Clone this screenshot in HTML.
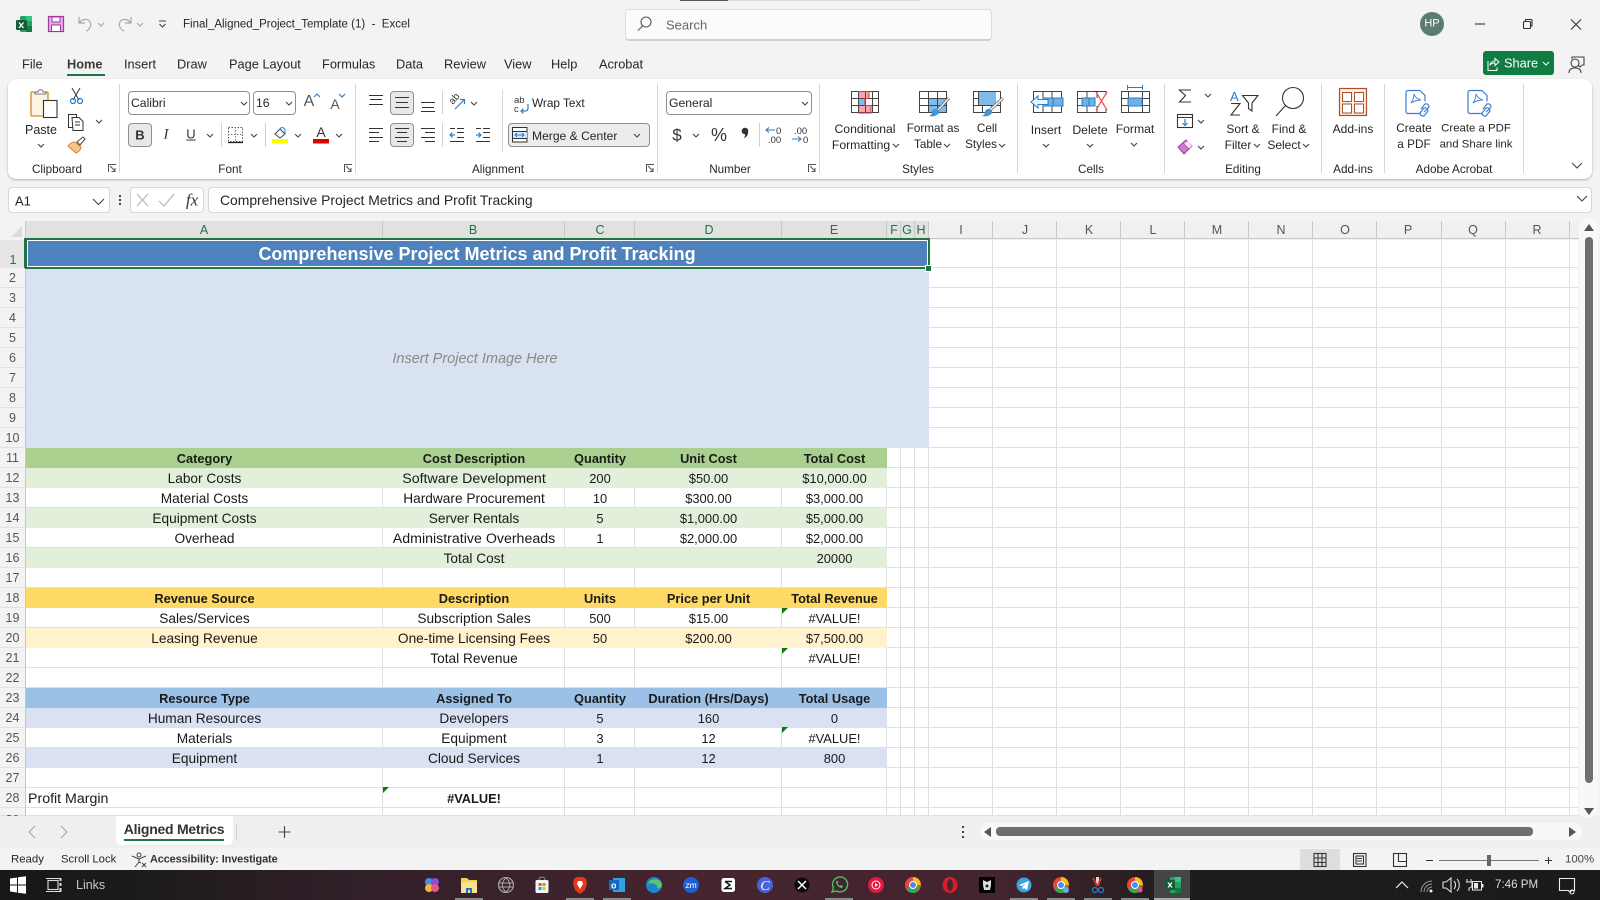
<!DOCTYPE html>
<html><head><meta charset="utf-8"><title>Excel</title>
<style>
*{box-sizing:border-box}
html,body{margin:0;padding:0}
body{width:1600px;height:900px;overflow:hidden;position:relative;background:#f3f3f3;font-family:"Liberation Sans",sans-serif;color:#262626;font-size:12.5px}
.c,.l{position:absolute;white-space:nowrap;line-height:1}
.c{transform:translate(-50%,-50%)}
.l{transform:translateY(-50%)}
.b{position:absolute}
.tab{font-size:12.8px}
.n{font-size:11.7px}
.rh{position:absolute;left:0;top:268px;width:25px;color:#555;font-size:12.5px;text-align:center}
.rh div{height:20px;line-height:19px;padding-top:1px;border-bottom:1px solid #e2e2e2}
.v{position:absolute;top:240px;height:576px;width:1px;background:#e0e0e0}
.hs{position:absolute;top:221px;height:17px;width:1px;background:#c8c8c8}
.ch{font-size:12.5px;color:#217346}
.cg{font-size:12.5px;color:#555}
table{position:absolute;left:26px;top:448px;border-collapse:collapse;table-layout:fixed;width:861px;font-size:13.7px;color:#1a1a1a}
td{padding:1px 0 0;height:20px;line-height:18px;text-align:center;white-space:nowrap;overflow:hidden}
td:nth-child(n+3){font-size:12.9px}
.h td,.h td:nth-child(n+3){font-weight:bold;font-size:12.8px}
.tri{position:absolute;width:0;height:0;border-top:6px solid #0b7a0b;border-right:6px solid transparent}
.w{color:#fff}
</style></head><body>

<!-- Title bar / top -->
<div class="b" style="left:680px;top:0;width:48px;height:1px;background:#555"></div>
<div class="b" style="left:728px;top:0;width:192px;height:1px;background:#ddd"></div>
<div class="l" style="left:183px;top:25px;font-size:11.5px">Final_Aligned_Project_Template (1)&nbsp; -&nbsp; Excel</div>
<div class="b" style="left:625px;top:9px;width:367px;height:32px;background:#fbfbfb;border:1px solid #dcdcdc;border-bottom:2px solid #d0d0d0;border-radius:4px"></div>
<div class="l" style="left:666px;top:25px;font-size:13px;color:#666">Search</div>
<div class="b" style="left:1420px;top:12px;width:24px;height:24px;border-radius:50%;background:#5b7e71"></div>
<div class="c w" style="left:1432px;top:24px;font-size:11px">HP</div>

<!-- Tabs -->
<div class="l tab" style="left:22px;top:65px">File</div>
<div class="l tab" style="left:67px;top:65px;font-weight:bold;color:#3a3a3a;font-size:12.8px">Home</div>
<div class="b" style="left:67px;top:74px;width:38px;height:2px;background:#217346"></div>
<div class="l tab" style="left:124px;top:65px">Insert</div>
<div class="l tab" style="left:177px;top:65px">Draw</div>
<div class="l tab" style="left:229px;top:65px">Page Layout</div>
<div class="l tab" style="left:322px;top:65px">Formulas</div>
<div class="l tab" style="left:396px;top:65px">Data</div>
<div class="l tab" style="left:444px;top:65px">Review</div>
<div class="l tab" style="left:504px;top:65px">View</div>
<div class="l tab" style="left:551px;top:65px">Help</div>
<div class="l tab" style="left:599px;top:65px">Acrobat</div>
<div class="b" style="left:1483px;top:51px;width:71px;height:24px;background:#107c41;border-radius:3px"></div>
<div class="l w" style="left:1504px;top:64px;font-size:12.8px">Share</div>

<!-- Ribbon -->
<div class="b" style="left:8px;top:79px;width:1584px;height:100px;background:#fff;border-radius:8px;box-shadow:0 1px 2px rgba(0,0,0,.28)"></div>
<div class="b" style="left:119px;top:84px;width:1px;height:89px;background:#d6d6d6"></div>
<div class="b" style="left:355px;top:84px;width:1px;height:89px;background:#d6d6d6"></div>
<div class="b" style="left:657px;top:84px;width:1px;height:89px;background:#d6d6d6"></div>
<div class="b" style="left:819px;top:84px;width:1px;height:89px;background:#d6d6d6"></div>
<div class="b" style="left:1017px;top:84px;width:1px;height:89px;background:#d6d6d6"></div>
<div class="b" style="left:1164px;top:84px;width:1px;height:89px;background:#d6d6d6"></div>
<div class="b" style="left:1321px;top:84px;width:1px;height:89px;background:#d6d6d6"></div>
<div class="b" style="left:1384px;top:84px;width:1px;height:89px;background:#d6d6d6"></div>
<div class="b" style="left:1523px;top:84px;width:1px;height:89px;background:#d6d6d6"></div>
<div class="b" style="left:502px;top:90px;width:1px;height:62px;background:#d6d6d6"></div>

<!-- Ribbon controls -->
<div class="b" style="left:128px;top:91px;width:122px;height:24px;border:1px solid #8f8f8f;border-radius:4px"></div>
<div class="b" style="left:253px;top:91px;width:43px;height:24px;border:1px solid #8f8f8f;border-radius:4px"></div>
<div class="b" style="left:128px;top:123px;width:24px;height:24px;border:1px solid #8f8f8f;border-radius:4px;background:#e8e8e8"></div>
<div class="b" style="left:390px;top:91px;width:24px;height:24px;border:1px solid #8f8f8f;border-radius:4px;background:#e8e8e8"></div>
<div class="b" style="left:390px;top:123px;width:24px;height:24px;border:1px solid #8f8f8f;border-radius:4px;background:#e8e8e8"></div>
<div class="b" style="left:508px;top:123px;width:142px;height:24px;border:1px solid #8f8f8f;border-radius:4px;background:#ececec"></div>
<div class="b" style="left:666px;top:91px;width:146px;height:24px;border:1px solid #8f8f8f;border-radius:4px"></div>

<div class="l" style="left:131px;top:103px;font-size:12.2px">Calibri</div>
<div class="l" style="left:256px;top:103px;font-size:12.2px">16</div>
<div class="c" style="left:309px;top:102px;font-size:16px;color:#555">A</div>
<div class="c" style="left:335px;top:104px;font-size:14px;color:#555">A</div>
<div class="c" style="left:140px;top:135px;font-weight:bold;font-size:13px;color:#333">B</div>
<div class="c" style="left:166px;top:135px;font-style:italic;font-family:'Liberation Serif',serif;font-size:15px;color:#333">I</div>
<div class="c" style="left:191px;top:134px;font-size:13px;color:#333;text-decoration:underline">U</div>
<div class="c" style="left:321px;top:132px;font-size:14px;color:#333">A</div>
<div class="l" style="left:532px;top:104px;font-size:11.8px">Wrap Text</div>
<div class="l" style="left:532px;top:136px;font-size:12.1px">Merge &amp; Center</div>
<div class="l" style="left:669px;top:103px;font-size:12.2px">General</div>
<div class="c" style="left:677px;top:135px;font-size:17px;color:#333">$</div>
<div class="c" style="left:719px;top:135px;font-size:18px;color:#333">%</div>
<div class="c" style="left:41px;top:130px">Paste</div>
<div class="c" style="left:865px;top:129px;font-size:12.2px">Conditional</div>
<div class="c" style="left:861px;top:145px;font-size:12.2px">Formatting</div>
<div class="c" style="left:933px;top:129px;font-size:11.7px">Format as</div>
<div class="c" style="left:928px;top:145px;font-size:11.7px">Table</div>
<div class="c" style="left:987px;top:129px;font-size:11.7px">Cell</div>
<div class="c" style="left:981px;top:145px;font-size:11.7px">Styles</div>
<div class="c" style="left:1046px;top:130px;font-size:12.2px">Insert</div>
<div class="c" style="left:1090px;top:130px;font-size:12.2px">Delete</div>
<div class="c" style="left:1135px;top:129px;font-size:12.2px">Format</div>
<div class="c" style="left:1243px;top:129px;font-size:12px">Sort &amp;</div>
<div class="c" style="left:1238px;top:145px;font-size:12px">Filter</div>
<div class="c" style="left:1289px;top:129px;font-size:12px">Find &amp;</div>
<div class="c" style="left:1284px;top:145px;font-size:12px">Select</div>
<div class="c" style="left:1353px;top:129px;font-size:12px">Add-ins</div>
<div class="c" style="left:1414px;top:129px;font-size:11.8px">Create</div>
<div class="c" style="left:1414px;top:145px;font-size:11.8px">a PDF</div>
<div class="c" style="left:1476px;top:129px;font-size:11.4px">Create a PDF</div>
<div class="c" style="left:1476px;top:145px;font-size:11.4px">and Share link</div>

<div class="c n" style="left:57px;top:170px">Clipboard</div>
<div class="c n" style="left:230px;top:170px">Font</div>
<div class="c n" style="left:498px;top:170px">Alignment</div>
<div class="c n" style="left:730px;top:170px">Number</div>
<div class="c n" style="left:918px;top:170px">Styles</div>
<div class="c n" style="left:1091px;top:170px">Cells</div>
<div class="c n" style="left:1243px;top:170px">Editing</div>
<div class="c n" style="left:1353px;top:170px">Add-ins</div>
<div class="c n" style="left:1454px;top:170px">Adobe Acrobat</div>

<!-- Formula bar -->
<div class="b" style="left:8px;top:187px;width:102px;height:26px;background:#fff;border:1px solid #d8d8d8;border-radius:4px"></div>
<div class="l" style="left:15px;top:201px;font-size:13px">A1</div>
<div class="b" style="left:130px;top:187px;width:74px;height:26px;background:#fff;border:1px solid #d8d8d8;border-radius:4px"></div>
<div class="c" style="left:192px;top:200px;font-family:'Liberation Serif',serif;font-style:italic;font-size:17px;color:#333">fx</div>
<div class="b" style="left:208px;top:187px;width:1384px;height:26px;background:#fff;border:1px solid #d8d8d8;border-radius:4px"></div>
<div class="l" style="left:220px;top:201px;font-size:13.9px">Comprehensive Project Metrics and Profit Tracking</div>

<!-- Column headers -->
<div class="b" style="left:26px;top:221px;width:903px;height:17px;background:#e1e1e1"></div>
<div class="b" style="left:929px;top:221px;width:650px;height:17px;background:#f0f0f0"></div>
<div class="b" style="left:26px;top:238px;width:903px;height:2px;background:#217346"></div>
<div class="b" style="left:929px;top:238px;width:650px;height:1px;background:#c6c6c6"></div>
<div class="hs" style="left:382px"></div><div class="hs" style="left:564px"></div><div class="hs" style="left:634px"></div><div class="hs" style="left:781px"></div><div class="hs" style="left:886px"></div><div class="hs" style="left:900px"></div><div class="hs" style="left:914px"></div><div class="hs" style="left:928px"></div><div class="hs" style="left:992px"></div><div class="hs" style="left:1056px"></div><div class="hs" style="left:1120px"></div><div class="hs" style="left:1184px"></div><div class="hs" style="left:1248px"></div><div class="hs" style="left:1312px"></div><div class="hs" style="left:1376px"></div><div class="hs" style="left:1441px"></div><div class="hs" style="left:1505px"></div><div class="hs" style="left:1569px"></div>
<div class="c ch" style="left:204px;top:230px">A</div>
<div class="c ch" style="left:473px;top:230px">B</div>
<div class="c ch" style="left:600px;top:230px">C</div>
<div class="c ch" style="left:709px;top:230px">D</div>
<div class="c ch" style="left:834px;top:230px">E</div>
<div class="c ch" style="left:894px;top:230px">F</div>
<div class="c ch" style="left:907px;top:230px">G</div>
<div class="c ch" style="left:921px;top:230px">H</div>
<div class="c cg" style="left:961px;top:230px">I</div>
<div class="c cg" style="left:1025px;top:230px">J</div>
<div class="c cg" style="left:1089px;top:230px">K</div>
<div class="c cg" style="left:1153px;top:230px">L</div>
<div class="c cg" style="left:1217px;top:230px">M</div>
<div class="c cg" style="left:1281px;top:230px">N</div>
<div class="c cg" style="left:1345px;top:230px">O</div>
<div class="c cg" style="left:1408px;top:230px">P</div>
<div class="c cg" style="left:1473px;top:230px">Q</div>
<div class="c cg" style="left:1537px;top:230px">R</div>

<!-- Grid -->
<div class="b" style="left:26px;top:240px;width:1552px;height:576px;background:#fff"></div>
<div class="b" style="left:26px;top:268px;width:1552px;height:548px;background:repeating-linear-gradient(to bottom,transparent 0,transparent 19px,#e0e0e0 19px,#e0e0e0 20px)"></div>
<div class="b" style="left:26px;top:267px;width:1552px;height:1px;background:#e0e0e0"></div>
<div class="b" style="left:0;top:815px;width:1578px;height:1px;background:#e0e0e0"></div>
<div class="v" style="left:382px"></div><div class="v" style="left:564px"></div><div class="v" style="left:634px"></div><div class="v" style="left:781px"></div><div class="v" style="left:886px"></div><div class="v" style="left:900px"></div><div class="v" style="left:914px"></div><div class="v" style="left:928px"></div><div class="v" style="left:992px"></div><div class="v" style="left:1056px"></div><div class="v" style="left:1120px"></div><div class="v" style="left:1184px"></div><div class="v" style="left:1248px"></div><div class="v" style="left:1312px"></div><div class="v" style="left:1376px"></div><div class="v" style="left:1441px"></div><div class="v" style="left:1505px"></div><div class="v" style="left:1569px"></div>
<div class="b" style="left:25px;top:221px;width:1px;height:595px;background:#c8c8c8"></div>

<!-- Row headers -->
<div class="b" style="left:0;top:240px;width:25px;height:28px;background:#e6e6e6"></div>
<div class="b" style="left:24px;top:238px;width:2px;height:30px;background:#217346"></div>
<div class="c" style="left:13px;top:260px;font-size:12.5px;color:#217346">1</div>
<div class="rh" style="height:548px;overflow:hidden">
<div>2</div><div>3</div><div>4</div><div>5</div><div>6</div><div>7</div><div>8</div><div>9</div><div>10</div><div>11</div><div>12</div><div>13</div><div>14</div><div>15</div><div>16</div><div>17</div><div>18</div><div>19</div><div>20</div><div>21</div><div>22</div><div>23</div><div>24</div><div>25</div><div>26</div><div>27</div><div>28</div><div style="transform:translateY(2px)">29</div>
</div>

<!-- Title + image placeholder -->
<div class="b" style="left:26px;top:240px;width:903px;height:28px;background:#4f81bd"></div>
<div class="b" style="left:26px;top:268px;width:903px;height:180px;background:#d9e2f0"></div>
<div class="c w" style="left:477px;top:254px;font-size:18px;font-weight:bold">Comprehensive Project Metrics and Profit Tracking</div>
<div class="c" style="left:475px;top:358.500px;font-size:14.500px;font-style:italic;color:#8a8a8a">Insert Project Image Here</div>
<div class="b" style="left:25px;top:238px;width:905px;height:31px;border:2px solid #217346"></div>
<div class="b" style="left:27px;top:240px;width:901px;height:27px;border:1px solid #fff"></div>
<div class="b" style="left:925px;top:265px;width:7px;height:7px;background:#217346;border:1px solid #fff"></div>

<!-- Data tables -->
<table>
<colgroup><col style="width:357px"><col style="width:182px"><col style="width:70px"><col style="width:147px"><col style="width:105px"></colgroup>
<tr class="h" style="background:#a9d08e"><td>Category</td><td>Cost Description</td><td>Quantity</td><td>Unit Cost</td><td>Total Cost</td></tr>
<tr style="background:#e2efda"><td>Labor Costs</td><td style="font-size:14.2px">Software Development</td><td>200</td><td>$50.00</td><td>$10,000.00</td></tr>
<tr><td>Material Costs</td><td>Hardware Procurement</td><td>10</td><td>$300.00</td><td>$3,000.00</td></tr>
<tr style="background:#e2efda"><td>Equipment Costs</td><td>Server Rentals</td><td>5</td><td>$1,000.00</td><td>$5,000.00</td></tr>
<tr><td>Overhead</td><td style="font-size:14.2px">Administrative Overheads</td><td>1</td><td>$2,000.00</td><td>$2,000.00</td></tr>
<tr style="background:#e2efda"><td></td><td>Total Cost</td><td></td><td></td><td>20000</td></tr>
<tr><td></td><td></td><td></td><td></td><td></td></tr>
<tr class="h" style="background:#ffd966"><td>Revenue Source</td><td>Description</td><td>Units</td><td>Price per Unit</td><td>Total Revenue</td></tr>
<tr><td>Sales/Services</td><td>Subscription Sales</td><td>500</td><td>$15.00</td><td>#VALUE!</td></tr>
<tr style="background:#fff2cc"><td>Leasing Revenue</td><td>One-time Licensing Fees</td><td>50</td><td>$200.00</td><td>$7,500.00</td></tr>
<tr><td></td><td>Total Revenue</td><td></td><td></td><td>#VALUE!</td></tr>
<tr><td></td><td></td><td></td><td></td><td></td></tr>
<tr class="h" style="background:#9bc2e6"><td>Resource Type</td><td>Assigned To</td><td>Quantity</td><td>Duration (Hrs/Days)</td><td>Total Usage</td></tr>
<tr style="background:#d9e1f2"><td>Human Resources</td><td>Developers</td><td>5</td><td>160</td><td>0</td></tr>
<tr><td>Materials</td><td>Equipment</td><td>3</td><td>12</td><td>#VALUE!</td></tr>
<tr style="background:#d9e1f2"><td>Equipment</td><td>Cloud Services</td><td>1</td><td>12</td><td>800</td></tr>
<tr><td></td><td></td><td></td><td></td><td></td></tr>
<tr><td style="text-align:left;padding-left:2px;font-size:14.2px">Profit Margin</td><td style="font-weight:bold;font-size:12.8px">#VALUE!</td><td></td><td></td><td></td></tr>
</table>
<div class="tri" style="left:782px;top:608px"></div>
<div class="tri" style="left:782px;top:648px"></div>
<div class="tri" style="left:782px;top:727px"></div>
<div class="tri" style="left:383px;top:787px"></div>

<!-- Sheet tabs / status -->
<div class="b" style="left:0;top:816px;width:1600px;height:32px;background:#efefef"></div>
<div class="b" style="left:116px;top:816px;width:117px;height:29px;background:#fff;border-radius:0 0 5px 5px"></div>
<div class="c" style="left:174px;top:829px;font-size:14px;color:#333;font-weight:bold;letter-spacing:-.25px">Aligned Metrics</div>
<div class="b" style="left:124px;top:839px;width:100px;height:2px;background:#217346"></div>
<div class="b" style="left:236px;top:824px;width:1px;height:16px;background:#d0d0d0"></div>
<div class="b" style="left:980px;top:823px;width:602px;height:17px;background:#f8f8f8;border-radius:8px"></div>
<div class="b" style="left:996px;top:827px;width:537px;height:9px;background:#6e6e6e;border-radius:4px"></div>
<div class="b" style="left:1579px;top:218px;width:19px;height:600px;background:#f8f8f8;border-radius:9px"></div>
<div class="b" style="left:1585px;top:237px;width:8px;height:546px;background:#6e6e6e;border-radius:4px"></div>
<div class="b" style="left:0;top:848px;width:1600px;height:22px;background:#f3f3f3"></div>
<div class="l" style="left:11px;top:860px;font-size:11.4px">Ready</div>
<div class="l" style="left:61px;top:860px;font-size:11.3px">Scroll Lock</div>
<div class="l" style="left:150px;top:860px;font-size:10.900px;font-weight:bold;letter-spacing:-.1px;color:#333">Accessibility: Investigate</div>
<div class="b" style="left:1300px;top:849px;width:40px;height:21px;background:#dddddd"></div>
<div class="l" style="left:1565px;top:860px;font-size:11.4px;color:#444">100%</div>

<!-- Taskbar -->
<div class="b" style="left:0;top:870px;width:1600px;height:30px;background:linear-gradient(to right,#171717 0,#1b1b1b 120px,#33202a 380px,#46252f 700px,#43252f 1000px,#2a1f22 1130px,#1c1c1c 1200px,#1b1b1b 1600px)"></div>
<div class="b" style="left:1154px;top:870px;width:36px;height:30px;background:#454545"></div>
<div class="l" style="left:76px;top:885px;font-size:12.5px;color:#c8c8c8">Links</div>
<div class="l" style="left:1495px;top:885px;font-size:11.600px;color:#ddd">7:46 PM</div>

<!-- Icons -->
<svg width="1600" height="900" viewBox="0 0 1600 900" style="position:absolute;left:0;top:0">
<!-- Excel -->
<rect x="20" y="16" width="12" height="16" rx="1.5" fill="#21a366"/><rect x="26" y="16" width="6" height="5" fill="#33c481"/><rect x="26" y="26" width="6" height="6" fill="#107c41"/>
<rect x="16" y="20" width="11" height="10" rx="1" fill="#185c37"/><path d="M19 22.5l4.5 5.5M23.5 22.5L19 28" stroke="#fff" stroke-width="1.3"/>
<!-- Save -->
<rect x="48.5" y="16.5" width="15" height="15" fill="#e9aaea" stroke="#9a3a9c" stroke-width="1.2"/><rect x="52" y="17" width="8" height="5" fill="#fff" stroke="#9a3a9c"/><rect x="51.5" y="25" width="9" height="6.5" fill="#fff" stroke="#9a3a9c"/>
<!-- undo redo -->
<g fill="none" stroke="#a8a8a8" stroke-width="1.2">
<path d="M79 17v6h6M79 23c3-4 9-5 11-1 2 4-1 8-4 9"/>
<path d="M131 17v6h-6M131 23c-3-4-9-5-11-1-2 4 1 8 4 9"/>
<path d="M98 23l3 3 3-3M137 23l3 3 3-3"/>
</g>
<path d="M159 21h7M159.5 24l3 3 3-3" fill="none" stroke="#444" stroke-width="1.1"/>
<!-- search -->
<circle cx="646" cy="22" r="5" fill="none" stroke="#555" stroke-width="1.1"/><path d="M642.5 26l-4.5 4.500" stroke="#555" stroke-width="1.1"/>
<!-- window -->
<path d="M1475 24h10" stroke="#333" stroke-width="1.1"/>
<rect x="1523.5" y="21.5" width="7" height="7" rx="1" fill="none" stroke="#333" stroke-width="1.1"/><path d="M1525.5 21v-1.500h5.500a1 1 0 0 1 1 1v5.500h-1.500" fill="none" stroke="#333" stroke-width="1.1"/>
<path d="M1571 19.500l10 10M1581 19.500l-10 10" stroke="#333" stroke-width="1.1"/>
<!-- share -->
<path d="M1488 61v9.500h9v-3M1490 65.500c0-2.500 2-4.500 5-4.500v-2.500l4 3.500-4 3.500v-2.500c-2.500 0-4 .5-5 2" fill="none" stroke="#fff" stroke-width="1"/>
<path d="M1543 62l3 3 3-3" fill="none" stroke="#fff" stroke-width="1.1"/>
<g fill="none" stroke="#444" stroke-width="1.1"><circle cx="1575" cy="63" r="4"/><path d="M1569 73c0-4 3-5 6-5s6 1 6 5M1572 59v-2h12v8h-2M1578 65l2 2 2-2"/></g>
<!-- Paste -->
<rect x="31" y="92" width="17" height="24" rx="1" fill="#fdf3e3" stroke="#d28a2a" stroke-width="1.3"/>
<path d="M35 94v-2h3c0-3 5-3 5 0h3v2z" fill="#fff" stroke="#777"/>
<rect x="43.500" y="100.500" width="13.500" height="17" fill="#fff" stroke="#333" stroke-width="1.1"/>
<!-- cut copy painter -->
<g fill="none" stroke="#333" stroke-width="1"><path d="M72 88l7 12M80 88l-7 12"/></g>
<g fill="none" stroke="#2a7fc9" stroke-width="1.3"><circle cx="73" cy="101" r="2.500"/><circle cx="80" cy="101" r="2.500"/></g>
<g fill="none" stroke="#333" stroke-width="1"><rect x="68.500" y="114.500" width="8" height="13"/><path d="M72 117.500h7l4 4v9h-10z" fill="#fff"/><path d="M75 122h5M75 125h5"/></g>
<path d="M68 146l8 7c3-1 5-4 5-6l-6-5c-3 0-6 2-7 4z" fill="#f3c78a" stroke="#d5822a"/><path d="M77 142l6-5 2 2-5 6z" fill="#fff" stroke="#444"/>
<!-- grow/shrink -->
<path d="M314 97l3-3 3 3" fill="none" stroke="#2a7fc9" stroke-width="1.200"/><path d="M339 94l3 3 3-3" fill="none" stroke="#2a7fc9" stroke-width="1.200"/>
<!-- border -->
<rect x="228.500" y="127.500" width="14" height="14" fill="none" stroke="#555" stroke-dasharray="1.500 1.500"/><path d="M235.500 127v14M228 134.500h15" stroke="#777" stroke-dasharray="1.500 1.500"/><path d="M228 142.500h15" stroke="#222" stroke-width="1.300"/>
<!-- fill colour -->
<path d="M275 134l5-5 5 5-5 4z" fill="#fff" stroke="#444"/><path d="M280 129c1-2 4-2 5 1v4" fill="none" stroke="#2a7fc9"/>
<rect x="272" y="139" width="16" height="4.500" fill="#ffff00"/>
<rect x="313" y="139" width="16" height="4.500" fill="#e00000"/>
<!-- align -->
<g stroke="#333" stroke-width="1.100" fill="none">
<path d="M369 95.500h14M370 99.500h12M369 104.500h14"/>
<path d="M395 97.500h14M396 102.500h12M395 107.500h14"/>
<path d="M421 102.500h14M422 107.500h12M421 111.500h14"/>
<path d="M369 128.500h14M369 132.500h10M369 137.500h14M369 141.500h10"/>
<path d="M395 128.500h14M397 132.500h10M395 137.500h14M397 141.500h10"/>
<path d="M421 128.500h14M425 132.500h10M421 137.500h14M425 141.500h10"/>
<path d="M457 128.500h7M457 132.500h7M457 137.500h7M450 141.500h14M450 128.500h5"/>
<path d="M483 128.500h7M483 132.500h7M483 137.500h7M476 141.500h14M476 128.500h5"/>
</g>
<path d="M455 135h-5M452.500 132.500l-2.500 2.500 2.500 2.500" fill="none" stroke="#2a7fc9" stroke-width="1.200"/>
<path d="M476 135h5M478.500 132.500l2.500 2.500-2.500 2.500" fill="none" stroke="#2a7fc9" stroke-width="1.200"/>
<path d="M442.500 91v23M442.500 123v24" stroke="#d0d0d0"/>
<path d="M759.500 123v24" stroke="#d0d0d0"/>
<path d="M221.500 123v24M265.500 123v24" stroke="#d0d0d0"/>
<!-- orientation -->
<text x="453" y="105" font-family="Liberation Sans" font-size="10" fill="#333" transform="rotate(-50 453 105)">ab</text>
<path d="M455 109l9-9M460 99.500h4.500v4.500" fill="none" stroke="#2a7fc9" stroke-width="1.200"/>
<!-- wrap -->
<text x="514" y="103" font-family="Liberation Sans" font-size="9.500" fill="#333">ab</text>
<text x="514" y="112" font-family="Liberation Sans" font-size="9.500" fill="#333">c</text>
<path d="M528 104v4c0 2-1 3-3 3h-4M523.500 108.500l-2.500 2.500 2.500 2.500" fill="none" stroke="#2a7fc9" stroke-width="1.200"/>
<!-- merge -->
<rect x="512.500" y="127.500" width="14.500" height="14.500" fill="#fff" stroke="#333"/><path d="M512.500 131.500h14.500M512.500 138.500h14.500" stroke="#333"/><rect x="513" y="132" width="14" height="6" fill="#d6eafa"/><path d="M515 135h9M517 133l-2 2 2 2M522 133l2 2-2 2" fill="none" stroke="#2a7fc9"/>
<!-- comma style -->
<circle cx="745" cy="131" r="3.300" fill="#333"/><path d="M748 131c.5 4-1.500 6-4.500 7.500 1.500-2 2-3.500 1.500-5z" fill="#333"/>
<!-- decimals -->
<text x="776" y="134" font-family="Liberation Sans" font-size="9.500" fill="#333">0</text><text x="768" y="143" font-family="Liberation Sans" font-size="9.500" fill="#333">.00</text>
<path d="M775 130h-9M769 127.500l-3 2.500 3 2.500" fill="none" stroke="#2a7fc9" stroke-width="1.100"/>
<text x="794" y="134" font-family="Liberation Sans" font-size="9.500" fill="#333">.00</text><text x="803" y="143" font-family="Liberation Sans" font-size="9.500" fill="#333">0</text>
<path d="M792 139h9M798 136.500l3 2.500-3 2.500" fill="none" stroke="#2a7fc9" stroke-width="1.100"/>
<!-- Conditional -->
<rect x="858" y="91" width="11" height="7" fill="#f9a3ab"/><rect x="858" y="98" width="7" height="7.500" fill="#7fbcea"/><rect x="858" y="105.500" width="13" height="7.500" fill="#f9a3ab"/>
<g fill="none" stroke="#444"><rect x="851.500" y="91.500" width="27" height="21"/><path d="M858.500 91v22M865.500 91v22M872.500 91v22M851 98.500h28M851 105.500h28"/></g>
<path d="M858 91.500h11v7h-4v7h6v7.500h-13" fill="none" stroke="#d9343f" stroke-width="1"/>
<!-- Format as table -->
<rect x="928" y="98" width="19" height="15" fill="#7fbcea"/>
<g fill="none" stroke="#444"><rect x="919.500" y="91.500" width="27" height="21"/><path d="M928.500 91v22M937.500 91v22M919 98.500h28M919 105.500h28"/></g>
<path d="M949 98l-12 13" stroke="#777" stroke-width="3"/><path d="M949 98l-12 13" stroke="#fff" stroke-width="1.200"/><path d="M935 109c3 0 5 2 4 4-2 3-6 4-10 3 2-1 3-2 3-4 0-1 1-3 3-3z" fill="#3f95d8"/>
<!-- Cell styles -->
<rect x="978" y="91" width="18" height="15" fill="#7fbcea"/>
<g fill="none" stroke="#444"><rect x="973.500" y="91.500" width="27" height="21"/><path d="M973 98.500h5M973 105.500h28M982.500 106v7M991.500 106v7M978.500 91v15"/></g>
<path d="M1003 98l-14 13" stroke="#777" stroke-width="3"/><path d="M1003 98l-14 13" stroke="#fff" stroke-width="1.200"/><path d="M988 109c3 0 5 2 4 4-2 3-6 4-10 3 2-1 3-2 3-4 0-1 1-3 3-3z" fill="#3f95d8"/>
<!-- Insert -->
<g fill="none" stroke="#444"><rect x="1033.500" y="91.500" width="28" height="21"/><path d="M1043 91v7M1052 91v7M1043 106v7M1052 106v7"/></g>
<rect x="1043" y="98" width="20" height="8" fill="#6cb2e8" stroke="#2a7fc9"/><path d="M1053 98v8" stroke="#2a7fc9"/>
<path d="M1031 102l7-6v3.500h10v5h-10v3.500z" fill="#eef6fd" stroke="#2a7fc9"/>
<!-- Delete -->
<g fill="none" stroke="#444"><path d="M1096 91.500h-18.500v21h18.500M1106 91.500h-10M1106 112.500h-10M1087 91v7M1097 91v7M1087 106v7M1097 106v7M1106 91v4M1106 109v4M1077 98.500h5M1077 105.500h5"/></g>
<rect x="1082" y="98" width="13" height="8" fill="#6cb2e8" stroke="#2a7fc9"/><path d="M1089 98v8" stroke="#2a7fc9"/>
<path d="M1096 92l11 18M1107 92l-11 18" stroke="#e8534f" stroke-width="1.200"/>
<!-- Format -->
<g fill="none" stroke="#444"><rect x="1121.500" y="91.500" width="28" height="21"/><path d="M1128.500 91v22M1142.500 91v22M1121 98.500h28M1121 105.500h28"/></g>
<rect x="1128" y="98" width="14" height="8" fill="#6cb2e8" stroke="#2a7fc9"/>
<path d="M1127 87.500h16M1127.500 85v5M1142.500 85v5" stroke="#2a7fc9"/>
<!-- Sigma -->
<path d="M1191 90h-11.500l6 5.500-6 6.500h11.500" fill="none" stroke="#333" stroke-width="1.100"/>
<rect x="1177.500" y="114.500" width="15" height="13" fill="#fff" stroke="#333" stroke-width="1.100"/><path d="M1177 117.500h16" stroke="#333"/><path d="M1185 119v6.500M1182.500 123l2.500 2.500 2.500-2.500" fill="none" stroke="#2a7fc9" stroke-width="1.200"/>
<path d="M1178 147l8-7 6 6-8 8z" fill="#c77fcb" stroke="#a13fa5"/><path d="M1183 142.500l5.500 6" stroke="#a13fa5"/><path d="M1188 141l4 5-3 2.500-5-5z" fill="#f6e3f6"/>
<!-- Sort -->
<text x="1230" y="101" font-family="Liberation Sans" font-size="13" fill="#2a7fc9">A</text>
<path d="M1231 103.500h9l-9 11.500h9" fill="none" stroke="#333" stroke-width="1.100"/>
<path d="M1242.500 95.500h15.500l-6 7.500v8l-3.500-2.500v-5.500z" fill="#fff" stroke="#333" stroke-width="1.100"/>
<!-- Find -->
<circle cx="1293" cy="98" r="10.500" fill="#fdfdfd" stroke="#333" stroke-width="1.100"/><path d="M1285.500 105.500l-9.500 10.500" stroke="#333" stroke-width="1.100"/>
<!-- Add-ins -->
<rect x="1339.500" y="88.500" width="27" height="27" fill="#fdeee0" stroke="#a8512a" stroke-width="1.200"/>
<rect x="1342.500" y="92.500" width="9" height="9" fill="#fff" stroke="#a8512a"/><rect x="1354.500" y="92.500" width="9" height="9" fill="#fff" stroke="#a8512a"/><rect x="1342.500" y="104" width="9" height="9" fill="#fff" stroke="#a8512a"/><rect x="1354.500" y="104" width="9" height="9" fill="#fff" stroke="#a8512a"/>
<!-- PDF -->
<g fill="none" stroke="#3a7fd0" stroke-width="1.200">
<path d="M1420 90.500h-12a2 2 0 0 0-2 2v19a2 2 0 0 0 2 2h12M1420 90.500l5 5v6"/>
<path d="M1411 103c2-3 3-7 3-9 1 3 3 5 7 6-4 0-7 1-10 3z" stroke-width=".9"/>
<path d="M1420 113l4-5a3 3 0 0 1 4 3l-4 5a3 3 0 0 1-4-3zM1424 112l5-5a3 3 0 0 0-4-3l-4 5"/>
<path d="M1482 90.500h-12a2 2 0 0 0-2 2v19a2 2 0 0 0 2 2h12M1482 90.500l5 5v6"/>
<path d="M1473 103c2-3 3-7 3-9 1 3 3 5 7 6-4 0-7 1-10 3z" stroke-width=".9"/>
<path d="M1482 113l4-5a3 3 0 0 1 4 3l-4 5a3 3 0 0 1-4-3zM1486 112l5-5a3 3 0 0 0-4-3l-4 5"/>
</g>
<!-- dialog launchers -->
<g fill="none" stroke="#555"><path d="M108.500 172v-7.500h7.500M110 166l5 5M115 168v3.500h-3.500"/><path d="M344.500 172v-7.500h7.500M346 166l5 5M351 168v3.500h-3.500"/><path d="M646.500 172v-7.500h7.500M648 166l5 5M653 168v3.500h-3.500"/><path d="M808.500 172v-7.500h7.500M810 166l5 5M815 168v3.500h-3.500"/></g>
<!-- carets -->
<g fill="none" stroke="#444" stroke-width="1.100">
<path d="M38 144l3 3 3-3M96 120l3 3 3-3M241 102l3 3 3-3M286 102l3 3 3-3M207 134l3 3 3-3M251 134l3 3 3-3M295 134l3 3 3-3M336 134l3 3 3-3M471 102l3 3 3-3M634 134l3 3 3-3M802 102l3 3 3-3M693 134l3 3 3-3M893 144l3 3 3-3M944 144l3 3 3-3M999 144l3 3 3-3M1043 144l3 3 3-3M1087 144l3 3 3-3M1131 143l3 3 3-3M1205 94l3 3 3-3M1198 120l3 3 3-3M1198 146l3 3 3-3M1254 144l3 3 3-3M1303 144l3 3 3-3"/>
<path d="M1572 163l5 5 5-5M93 199l5.500 5.500 5.500-5.500M1577 196l5 5 5-5"/>
</g>
<!-- formula bar bits -->
<g fill="#444"><rect x="119" y="195" width="2" height="2"/><rect x="119" y="199" width="2" height="2"/><rect x="119" y="203" width="2" height="2"/></g>
<path d="M137 194l11 12M148 194l-11 12" stroke="#b5b5b5" stroke-width="1.200"/><path d="M159 201l5 5 10-12" fill="none" stroke="#b5b5b5" stroke-width="1.200"/>
<!-- corner -->
<path d="M22 226v11H11z" fill="#dcdcdc"/>
<!-- scroll arrows -->
<path d="M1589 224l5 7h-10z" fill="#555"/><path d="M1589 816l-5-7h10z" fill="#555" transform="translate(0 -1)"/>
<path d="M984 832l7-5v10z" fill="#555"/><path d="M1576 832l-7-5v10z" fill="#555"/>
<g fill="#444"><rect x="962" y="826" width="2" height="2"/><rect x="962" y="831" width="2" height="2"/><rect x="962" y="836" width="2" height="2"/></g>
<!-- sheet nav -->
<path d="M35 826l-6 6 6 6" fill="none" stroke="#a8a8a8" stroke-width="1.200"/><path d="M61 826l6 6-6 6" fill="none" stroke="#a8a8a8" stroke-width="1.200"/>
<path d="M284.500 826v12M278.500 832h12" stroke="#444" stroke-width="1.100"/>
<!-- accessibility -->
<g fill="none" stroke="#444" stroke-width="1"><circle cx="139" cy="855" r="2"/><path d="M132 856l7 3 7-3M139 859v3l-4 5M139 862l2 1"/><path d="M142 863l4 4M146 863l-4 4"/></g>
<!-- status views -->
<g fill="none" stroke="#333" stroke-width="1.100">
<rect x="1314" y="853.500" width="12" height="13"/><path d="M1318 853.500v13M1322 853.500v13M1314 858h12M1314 862.500h12"/>
<rect x="1353.500" y="853.500" width="12.500" height="13"/><rect x="1356" y="856" width="7.500" height="8"/><path d="M1357 858.500h5M1357 861h5"/>
<rect x="1393.500" y="853.500" width="13" height="13"/><path d="M1398.500 853.500v8h8"/>
</g>
<path d="M1426 860.500h7M1545 860.500h7M1548.500 857v7" stroke="#333" stroke-width="1.100"/>
<path d="M1439 860.500h100" stroke="#777"/><rect x="1487" y="855" width="4" height="11" fill="#666"/>
<!-- Taskbar left -->
<path d="M10 878.500l7-1v7h-7zM18 877.300l8-1.100v8.300h-8zM10 885.500h7v7l-7-1zM18 885.500h8v8.300l-8-1.100z" fill="#fff"/>
<g fill="none" stroke="#ddd" stroke-width="1.100"><rect x="48" y="880.500" width="10" height="9"/><path d="M46 878.500h14M46 891.500h14"/></g><path d="M60.500 878v3M60.500 883v3M60.500 888v4" stroke="#ddd" stroke-width="2"/>
<!-- Taskbar apps -->
<circle cx="429" cy="882" r="4" fill="#3f8fe8"/><circle cx="435" cy="882" r="4" fill="#8b4bd8"/><circle cx="429" cy="888" r="4" fill="#f5b23c"/><circle cx="435" cy="888" r="4" fill="#e8558a"/>
<path d="M461 878h6l2 2h8v13h-16z" fill="#f7cf55"/><rect x="461" y="882" width="16" height="11" fill="#fce08a"/><path d="M466 893v-5h6v5h-2v-3h-2v3z" fill="#1f78c8"/>
<circle cx="506" cy="885" r="7.500" fill="none" stroke="#aaa" stroke-width="1.100"/><path d="M499 883h14M499 887h14M506 878c-5 4-5 10 0 14M506 878c5 4 5 10 0 14" fill="none" stroke="#aaa"/>
<rect x="535.500" y="880" width="13" height="13" rx="1.500" fill="#f5f5f5"/><path d="M539 880c0-4 6-4 6 0" fill="none" stroke="#4aa9e0"/><rect x="538.500" y="883" width="3" height="3" fill="#f25022"/><rect x="542.500" y="883" width="3" height="3" fill="#7fba00"/><rect x="538.500" y="887" width="3" height="3" fill="#00a4ef"/><rect x="542.500" y="887" width="3" height="3" fill="#ffb900"/>
<path d="M574 879l3-2h6l3 2 1 5-2 6-5 4-5-4-2-6z" fill="#e2391b"/><path d="M578 881h4l1 3-3 5-3-5z" fill="#fff"/>
<rect x="613" y="878" width="12" height="14" fill="#2fa3e0"/><rect x="609" y="880" width="10" height="10" fill="#0f6cbd"/><text x="611" y="888.500" font-family="Liberation Sans" font-size="9" font-weight="bold" fill="#fff">o</text>
<circle cx="654" cy="885" r="8" fill="#1b86c9"/><path d="M648 884c1-6 13-7 14 1 0 3-3 4-5 3 2-4-6-6-9-4z" fill="#5ec46f"/>
<circle cx="691" cy="885" r="8" fill="#1e5fd6"/><text x="691" y="888" text-anchor="middle" font-family="Liberation Sans" font-size="8.500" fill="#fff">zm</text>
<rect x="721.500" y="878" width="13.500" height="14" rx="2.500" fill="#fff"/><path d="M725 881.500l5 3.500-5 3.500h7M732 881.500h-7" fill="none" stroke="#111" stroke-width="1.400"/>
<circle cx="765" cy="885" r="8" fill="#4a63d8"/><text x="765" y="890" text-anchor="middle" font-family="Liberation Serif" font-style="italic" font-size="14" fill="#fff">C</text>
<circle cx="802" cy="885" r="7.500" fill="#0a0a0a"/><path d="M798 881l8 8M806 881l-8 8" stroke="#fff" stroke-width="1.500"/>
<path d="M832 892l1.500-4a7.500 7.500 0 1 1 3 3z" fill="none" stroke="#4fbf67" stroke-width="1.400"/><path d="M836 882c0 3 3 6 6 6l1-2-2-1-1 1c-1-.5-2-1.500-2.500-2.500l1-1-1-2z" fill="#4fbf67"/>
<circle cx="876" cy="885" r="8" fill="#e8173f"/><circle cx="876" cy="885" r="4" fill="none" stroke="#fff"/><path d="M875 883l3 2-3 2z" fill="#fff"/>
<circle cx="913" cy="885" r="8" fill="#e8453c"/><path d="M906 889a8 8 0 0 0 11 3l3-7-7 0z" fill="#33a853"/><path d="M913 877a8 8 0 0 1 7 4l1 4h-8z" fill="#f9bc15"/><circle cx="913" cy="885" r="3.500" fill="#4c8bf5" stroke="#fff"/>
<ellipse cx="950" cy="885" rx="7.500" ry="8" fill="#d81f26"/><ellipse cx="950" cy="885" rx="3" ry="6" fill="#48252f"/>
<rect x="979" y="877" width="16" height="16" fill="#000"/><path d="M983 880l4 2 4-2v5l-1 5h-6l-1-5z" fill="#ddd"/><circle cx="987" cy="886" r="1.500" fill="#222"/>
<circle cx="1024" cy="885" r="7.500" fill="#3aa3de"/><path d="M1019 885l10-4-2 9-3-2-1.500 1.500v-3l4-3-5 2.500z" fill="#fff"/>
<circle cx="1061" cy="885" r="8" fill="#e8453c"/><path d="M1054 889a8 8 0 0 0 11 3l3-7-7 0z" fill="#33a853"/><path d="M1061 877a8 8 0 0 1 7 4l1 4h-8z" fill="#f9bc15"/><circle cx="1061" cy="885" r="3.500" fill="#4c8bf5" stroke="#fff"/><circle cx="1066" cy="890" r="3" fill="#6ea8d8"/>
<rect x="1096" y="877" width="3" height="9" fill="#d8d8d8"/><path d="M1093 878l4 8M1101 878l-3 8" stroke="#c8341f" stroke-width="2"/><circle cx="1095" cy="890" r="2.500" fill="none" stroke="#2a7fc9" stroke-width="1.200"/><circle cx="1101" cy="890" r="2.500" fill="none" stroke="#2a7fc9" stroke-width="1.200"/>
<circle cx="1135" cy="885" r="8" fill="#e8453c"/><path d="M1128 889a8 8 0 0 0 11 3l3-7-7 0z" fill="#33a853"/><path d="M1135 877a8 8 0 0 1 7 4l1 4h-8z" fill="#f9bc15"/><circle cx="1135" cy="885" r="3.500" fill="#4c8bf5" stroke="#fff"/><circle cx="1140" cy="890" r="2.500" fill="#e8558a"/>
<rect x="1170" y="877" width="11" height="16" rx="1" fill="#21a366"/><rect x="1175" y="877" width="6" height="5" fill="#33c481"/><rect x="1175" y="888" width="6" height="5" fill="#107c41"/><rect x="1165" y="880" width="10" height="10" rx="1" fill="#185c37"/><path d="M1168 882.500l4 5M1172 882.500l-4 5" stroke="#fff" stroke-width="1.200"/>
<!-- taskbar underlines -->
<g fill="#8a8a8a"><rect x="455" y="898" width="28" height="2"/><rect x="566" y="898" width="28" height="2"/><rect x="603" y="898" width="28" height="2"/><rect x="825" y="898" width="28" height="2"/><rect x="1010" y="898" width="28" height="2"/><rect x="1047" y="898" width="28" height="2"/><rect x="1084" y="898" width="28" height="2"/><rect x="1121" y="898" width="28" height="2"/><rect x="1154" y="898" width="36" height="2" fill="#aaa"/></g>
<!-- tray -->
<path d="M1396 888l6-6 6 6" fill="none" stroke="#e8e8e8" stroke-width="1.200"/>
<g fill="none" stroke="#999" stroke-width="1"><path d="M1421 892a11 11 0 0 1 11-11M1424 892a8 8 0 0 1 8-8M1427 892a5 5 0 0 1 5-5"/></g><circle cx="1431" cy="891" r="1.500" fill="#eee"/>
<path d="M1443 882h3l5-4v14l-5-4h-3zM1454 881c2 2 2 6 0 8M1457 879c3 3 3 9 0 12" fill="none" stroke="#e0e0e0" stroke-width="1.100"/>
<path d="M1467 879v3M1471 879v3M1466 882h6v3c0 2-1 3-3 3h0v3" fill="none" stroke="#e8e8e8"/><rect x="1472.500" y="881.500" width="9" height="8.500" fill="none" stroke="#e8e8e8"/><rect x="1474" y="883" width="4" height="5.500" fill="#e8e8e8"/><rect x="1482" y="884" width="1.500" height="3.500" fill="#e8e8e8"/>
<path d="M1559.500 878.500h15v12h-3l-1.500 2-1.500-2h-9z" fill="none" stroke="#eee" stroke-width="1.100"/><circle cx="1572" cy="892" r="2" fill="none" stroke="#eee"/>
</svg>
</body></html>
